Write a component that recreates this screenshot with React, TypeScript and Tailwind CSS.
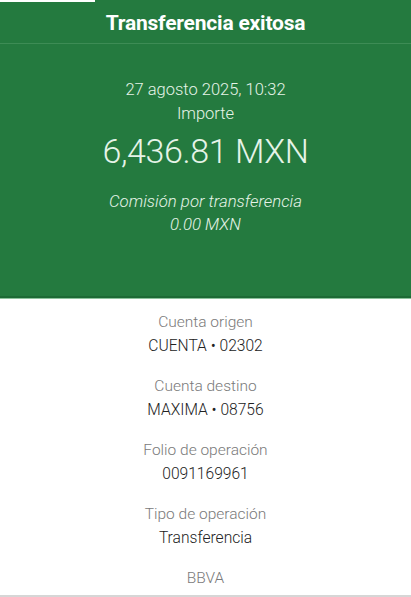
import React from "react";

const rows = [
  ["Cuenta origen", "CUENTA • 02302"],
  ["Cuenta destino", "MAXIMA • 08756"],
  ["Folio de operación", "0091169961"],
  ["Tipo de operación", "Transferencia"],
];

export default function App() {
  return (
    <div className="w-[411px] h-[597px] bg-white flex flex-col overflow-hidden" style={{ fontFamily: "Roboto, 'Noto Sans', sans-serif" }}>
      <div className="relative bg-[#247a3f] h-[298px] flex flex-col border-b-2 border-[#1d6a35]">
        <div className="absolute left-0 top-0 w-[95px] h-[2px] bg-white" />
        <div className="h-[44px] flex items-center justify-center border-b border-[#3d8c55] pt-[5px]">
          <span className="text-white font-bold text-[21px] tracking-[-0.2px]">Transferencia exitosa</span>
        </div>
        <div className="flex flex-col items-center text-[#e6f4e8] pt-[34px]">
          <div className="text-[16.5px] leading-[24px] font-light">27 agosto 2025, 10:32</div>
          <div className="text-[16.5px] leading-[24px] font-light">Importe</div>
          <div className="text-[34px] leading-[40px] font-light mt-[5px] tracking-[-0.4px]">6,436.81 MXN</div>
          <div className="text-[16.8px] leading-[23px] font-light italic mt-[19px]">Comisión por transferencia</div>
          <div className="text-[16.8px] leading-[23px] font-light italic">0.00 MXN</div>
        </div>
      </div>
      <div className="h-[1px] bg-[#8cc29c]" />
      <div className="flex-1 flex flex-col items-center pt-[11px] border-b-2 border-[#d6d6d6]">
        {rows.map(([l, v]) => (
          <div key={l} className="flex flex-col items-center h-[64px]">
            <div className="text-[15.5px] leading-[24px] text-[#7a7a7a] font-light">{l}</div>
            <div className="text-[15.6px] leading-[24px] text-[#222] font-light">{v}</div>
          </div>
        ))}
        <div className="text-[15.5px] leading-[24px] text-[#7a7a7a] font-light">BBVA</div>
      </div>
    </div>
  );
}
